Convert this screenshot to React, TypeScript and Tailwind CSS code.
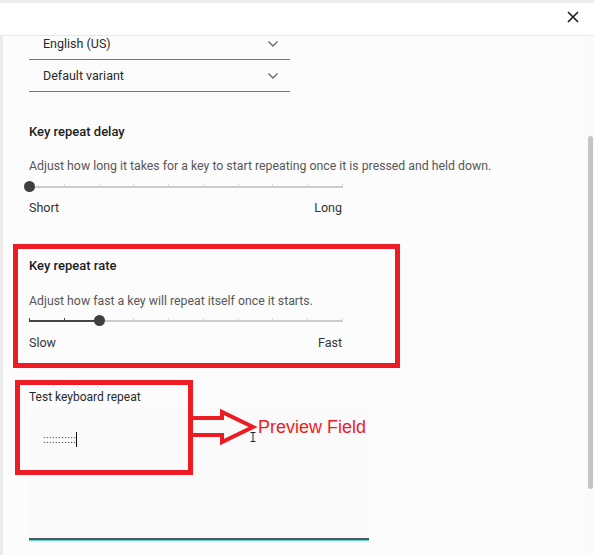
import { useState } from 'react'

function Chevron() {
  return (
    <svg width="12" height="8" viewBox="0 0 12 8" fill="none">
      <path d="M1.5 1.5 L6 6 L10.5 1.5" stroke="#6b6b6b" strokeWidth="1.4" />
    </svg>
  )
}

function Dropdown({ label, clipped }: { label: string; clipped?: boolean }) {
  return (
    <div
      className={`w-[261px] flex justify-between pl-[14px] pr-[11px] border-b border-[#7a7a7a] ${
        clipped ? 'h-[24px] items-start' : 'h-[32px] items-center'
      }`}
    >
      <span className="text-[12.5px] leading-[15px] text-[#2a2a2a]">{label}</span>
      <span className={clipped ? 'pt-[4px]' : ''}>
        <Chevron />
      </span>
    </div>
  )
}

function Slider({ value, filled }: { value: number; filled?: boolean }) {
  const steps = 10
  const pct = value / (steps - 1)
  return (
    <div className="relative w-[314px] h-[14px]">
      {/* track */}
      <div className="absolute left-0 right-0 top-[6px] h-[2px] bg-[#cbcbcb]" />
      {filled && (
        <div
          className="absolute left-0 top-[6px] h-[2px] bg-[#454545]"
          style={{ width: `${pct * 313}px` }}
        />
      )}
      {/* ticks */}
      <div className="absolute left-0 right-0 top-[4px] flex justify-between">
        {Array.from({ length: steps }).map((_, i) => (
          <div
            key={i}
            className={`w-[1px] h-[3px] ${filled && i / (steps - 1) <= pct ? 'bg-[#454545]' : 'bg-[#d6d6d6]'}`}
          />
        ))}
      </div>
      {/* thumb */}
      <div
        className="absolute top-[1px] w-[11px] h-[11px] -ml-[5px] rounded-full bg-[#3f3f3f]"
        style={{ left: `${pct * 313}px` }}
      />
    </div>
  )
}

export default function App() {
  const [text] = useState(':::::::::::')

  return (
    <div className="w-[594px] h-[555px] bg-[#fcfcfc] flex flex-col overflow-hidden font-['Roboto',sans-serif]">
      <div className="h-[3px] bg-[#eeeeee]" />

      {/* Header */}
      <div className="h-[33px] bg-white border-b border-[#e8e8e8] flex justify-end items-start pt-[8px] pr-[15px]">
        <svg width="12" height="12" viewBox="0 0 12 12">
          <path d="M1 1 L11 11 M11 1 L1 11" stroke="#222" strokeWidth="1.7" />
        </svg>
      </div>

      <div className="flex-1 flex min-h-0">
        <div className="w-[3px] bg-[#ebebeb]" />

        {/* Scrolled content */}
        <div className="flex-1 overflow-hidden pl-[26px]">
          <div className="flex flex-col items-start">
            <Dropdown label="English (US)" clipped />
            <Dropdown label="Default variant" />

            {/* Key repeat delay */}
            <div className="mt-[30px] text-[13px] leading-[20px] font-medium text-[#1e1e1e]">Key repeat delay</div>
            <div className="mt-[15px] text-[12.3px] leading-[18px] text-[#575757]">
              Adjust how long it takes for a key to start repeating once it is pressed and held down.
            </div>
            <div className="mt-[5px]">
              <Slider value={0} />
            </div>
            <div className="mt-[5px] w-[313px] flex justify-between text-[12.5px] leading-[18px] text-[#333]">
              <span>Short</span>
              <span>Long</span>
            </div>

            {/* Key repeat rate */}
            <div className="relative mt-[39px] flex flex-col items-start">
              <div className="absolute left-[-16px] top-[-12px] w-[387px] h-[124px] border-[5px] border-[#ed1c24] pointer-events-none" />
              <div className="text-[13px] leading-[20px] font-medium text-[#1e1e1e]">Key repeat rate</div>
              <div className="mt-[16px] text-[12.3px] leading-[18px] text-[#575757]">
                Adjust how fast a key will repeat itself once it starts.
              </div>
              <div className="mt-[4px]">
                <Slider value={2} filled />
              </div>
              <div className="mt-[6px] w-[313px] flex justify-between text-[12.5px] leading-[18px] text-[#333]">
                <span>Slow</span>
                <span>Fast</span>
              </div>
            </div>

            {/* Test keyboard repeat */}
            <div className="relative mt-[36px] flex flex-col items-start">
              <div className="absolute left-[-14px] top-[-8px] w-[178px] h-[95px] border-[5px] border-[#ed1c24] pointer-events-none" />
              <svg className="absolute left-[159px] top-[18px]" width="70" height="42" viewBox="0 0 70 42" fill="none">
                <path
                  d="M5 12 L34 12 L34 6 L65 21 L34 36 L34 29 L5 29"
                  stroke="#ed1c24"
                  strokeWidth="4"
                  strokeLinejoin="miter"
                />
              </svg>
              <svg className="absolute left-[221px] top-[44px]" width="6" height="10" viewBox="0 0 6 10">
                <path d="M0.5 0.5 H5.5 M3 0.5 V9.5 M0.5 9.5 H5.5" stroke="#222" strokeWidth="1" />
              </svg>
              <div className="absolute left-[229px] top-[28px] text-[18px] leading-[22px] text-[#ed1c24] font-['Liberation_Sans',Arial,sans-serif] whitespace-nowrap">
                Preview Field
              </div>

              <div className="text-[12px] leading-[18px] text-[#2a2a2a]">Test keyboard repeat</div>
              <div className="mt-[4px] w-[340px] flex flex-col">
                <div className="h-[128px] bg-[#fafafa] pl-[14px] pt-[22px]">
                  <div className="flex items-center h-[15px]">
                    <span className="text-[10px] leading-[15px] tracking-[0.6px] text-[#333]">{text}</span>
                    <span className="w-[1px] h-[15px] bg-[#111]" />
                  </div>
                </div>
                <div className="h-[2px] bg-[#4d5a5a]" />
                <div className="h-[1px] bg-[#5fd6d6]" />
              </div>
            </div>
          </div>
        </div>

        {/* Scrollbar */}
        <div className="w-[9px] pl-[3px] pt-[100px] bg-[#fafafa]">
          <div className="w-[5px] h-[353px] rounded-full bg-[#c4c4c4]" />
        </div>
      </div>
    </div>
  )
}
